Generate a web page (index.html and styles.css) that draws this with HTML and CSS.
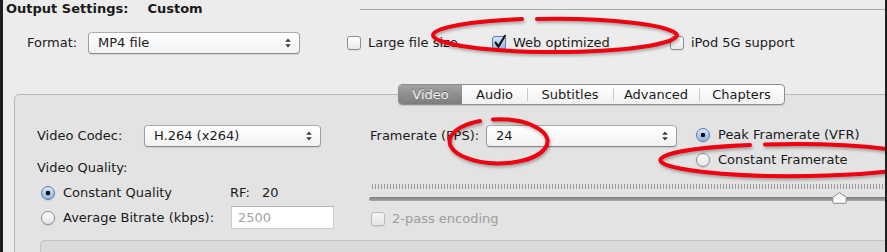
FILE: index.html
```html
<!DOCTYPE html>
<html lang="en">
<head>
    <meta charset="UTF-8">
    <title>Output Settings</title>
    <link rel="stylesheet" href="styles.css">
</head>
<body>

<div class="window">

    <div class="output-head">
        <span class="title">Output Settings:</span>
        <span class="title preset">Custom</span>
        <span class="rule"></span>
    </div>

    <div class="format-row">
        <span class="format-label">Format:</span>
        <div class="popup popup-format">
            <span>MP4 file</span>
            <svg class="arrows" width="6" height="10" viewBox="0 0 6 10"><path d="M3 0.5 L5.8 3.8 H0.2Z M3 9.5 L5.8 6.2 H0.2Z" fill="#3a3a3a"/></svg>
        </div>
        <label class="check check-large"><span class="box"></span>Large file size</label>
        <label class="check check-web"><span class="box checked"><svg class="tick" width="14" height="15" viewBox="0 0 14 15"><path d="M2.6 8.6 L5.4 12.6 L12 1.8" fill="none" stroke="#161616" stroke-width="2.2" stroke-linecap="round" stroke-linejoin="round"/></svg></span>Web optimized</label>
        <label class="check"><span class="box"></span>iPod 5G support</label>
    </div>

    <div class="panel">
        <div class="tabs">
            <span class="tab tab-video active">Video</span>
            <span class="tab tab-audio">Audio</span>
            <span class="tab tab-wide">Subtitles</span>
            <span class="tab tab-wide">Advanced</span>
            <span class="tab tab-last">Chapters</span>
        </div>

        <div class="panel-body">
            <div class="col-left">
                <div class="codec-row">
                    <span class="codec-label">Video Codec:</span>
                    <div class="popup popup-codec">
                        <span>H.264 (x264)</span>
                        <svg class="arrows" width="6" height="10" viewBox="0 0 6 10"><path d="M3 0.5 L5.8 3.8 H0.2Z M3 9.5 L5.8 6.2 H0.2Z" fill="#3a3a3a"/></svg>
                    </div>
                </div>
                <div class="quality-title">Video Quality:</div>
                <div class="quality-row">
                    <span class="radio on"></span>
                    <span class="quality-label">Constant Quality</span>
                    <span class="rf">RF:</span><span class="rf-value">20</span>
                </div>
                <div class="quality-row bitrate-row">
                    <span class="radio"></span>
                    <span class="quality-label">Average Bitrate (kbps):</span>
                    <div class="field">2500</div>
                </div>
            </div>

            <div class="col-right">
                <div class="rate-row">
                    <span class="rate-label">Framerate (FPS):</span>
                    <div class="popup popup-rate">
                        <span>24</span>
                        <svg class="arrows" width="6" height="10" viewBox="0 0 6 10"><path d="M3 0.5 L5.8 3.8 H0.2Z M3 9.5 L5.8 6.2 H0.2Z" fill="#3a3a3a"/></svg>
                    </div>
                    <div class="rate-options">
                        <div class="option"><span class="radio on"></span>Peak Framerate (VFR)</div>
                        <div class="option"><span class="radio"></span>Constant Framerate</div>
                    </div>
                </div>
                <div class="slider">
                    <div class="ticks"></div>
                    <div class="track"></div>
                    <svg class="thumb" width="15" height="12" viewBox="0 0 15 12"><path d="M7.5 0.7 L14.2 5.2 V10 Q14.2 11.3 12.9 11.3 H2.1 Q0.8 11.3 0.8 10 V5.2 Z" fill="#fbfbfb" stroke="#8a8a8a" stroke-width="1"/></svg>
                </div>
                <label class="check disabled"><span class="box"></span>2-pass encoding</label>
            </div>
        </div>

        <div class="subpanel"></div>
    </div>

    <svg class="marks" width="887" height="252" viewBox="0 0 887 252">
        <path d="M522 19 A122 17 0 0 0 433 35 A122 17 0 0 0 677 35 A122 17 0 0 0 537 19"/>
        <path d="M480 121 A49 22 0 1 0 493 119.5"/>
        <path d="M750 145 A132 16 0 1 0 765 144.5"/>
    </svg>

</div>

</body>
</html>
```

FILE: styles.css
```css
body {
    margin: 0;
    background-color: #1e1e1e;
    font-family: "DejaVu Sans", sans-serif;
    font-size: 13px;
    line-height: 16px;
    color: #1a1a1a;
}
.window {
    position: relative;
    margin-left: 3px;
    width: 882px;
    height: 252px;
    background-color: #ececec;
    overflow: hidden;
}
.output-head {
    display: flex;
    align-items: center;
    height: 16px;
    margin-top: 1px;
    padding-left: 3px;
}
.title {
    font-weight: bold;
    white-space: nowrap;
}
.preset {
    margin-left: 19px;
}
.rule {
    flex: 1;
    height: 1px;
    margin-left: 157px;
    background-color: #a9a9a9;
}
.format-row {
    display: flex;
    align-items: center;
    height: 22px;
    margin-top: 15px;
    padding-left: 24px;
}
.format-label {
    width: 61px;
}
.popup {
    box-sizing: border-box;
    display: flex;
    align-items: center;
    justify-content: space-between;
    height: 22px;
    padding: 0 8px 0 9px;
    border: 1px solid #9d9d9d;
    border-top-color: #acacac;
    border-bottom-color: #878787;
    border-radius: 4px;
    background: linear-gradient(#ffffff, #f2f2f2);
    box-shadow: 0 1px 1px rgba(0, 0, 0, 0.1);
    white-space: nowrap;
}
.popup-format {
    width: 212px;
}
.popup-codec {
    width: 177px;
}
.popup-rate {
    width: 191px;
}
.check {
    display: flex;
    align-items: center;
    white-space: nowrap;
}
.check-large {
    width: 145px;
    margin-left: 47px;
}
.check-web {
    width: 178px;
}
.box {
    box-sizing: border-box;
    display: flex;
    justify-content: center;
    width: 14px;
    height: 14px;
    margin-right: 7px;
    border: 1px solid #8e8e8e;
    border-radius: 3px;
    background: linear-gradient(#ffffff, #e9e9e9);
    box-shadow: 0 1px 1px rgba(0, 0, 0, 0.08);
}
.box.checked {
    border-color: #5b7ba8;
    background: linear-gradient(#d6e6f9, #94b8e4);
}
.tick {
    flex: none;
    margin-top: -3px;
    margin-left: 1px;
}
.check.disabled {
    margin-top: 10px;
    margin-left: 2px;
    color: #9d9d9d;
}
.check.disabled .box {
    border-color: #bdbdbd;
    background: linear-gradient(#f4f4f4, #e6e6e6);
}
.panel {
    margin: 40px -30px 0 11px;
    height: 200px;
    border: 1px solid #b8b8b8;
    border-radius: 5px 0 0 0;
    background-color: #e3e3e3;
}
.tabs {
    display: flex;
    width: 385px;
    height: 19px;
    margin: -11px 0 0 383px;
    border: 1px solid #8d8d8d;
    border-radius: 4px;
    background: linear-gradient(#ffffff, #f1f1f1);
    box-shadow: 0 1px 1px rgba(0, 0, 0, 0.12);
}
.tab {
    display: flex;
    align-items: center;
    justify-content: center;
    height: 19px;
    padding-top: 1px;
    box-sizing: border-box;
    width: 86px;
    background: linear-gradient(#c9c9c9, #c9c9c9) no-repeat left center / 1px 13px;
}
.tab-video {
    width: 63px;
}
.tab-audio {
    width: 65px;
    background: none;
}
.tab-last {
    width: 85px;
}
.tab.active {
    border-radius: 3px 0 0 3px;
    background: linear-gradient(#a2a2a2, #7d7d7d);
    color: #f2f2f2;
    text-shadow: 0 -1px 0 rgba(0, 0, 0, 0.35);
}
.panel-body {
    display: flex;
    margin-top: 20px;
}
.col-left {
    width: 332px;
    margin-left: 22px;
}
.codec-row {
    display: flex;
    align-items: center;
}
.codec-label {
    width: 107px;
}
.quality-title {
    margin-top: 13px;
}
.quality-row {
    display: flex;
    align-items: center;
    height: 22px;
    margin-top: 6px;
}
.bitrate-row {
    height: 23px;
    margin-top: 2px;
}
.radio {
    box-sizing: border-box;
    flex: none;
    width: 14px;
    height: 14px;
    border: 1px solid #8c8c8c;
    border-radius: 50%;
    background: linear-gradient(#ffffff, #e4e4e4);
    box-shadow: 0 1px 1px rgba(0, 0, 0, 0.1);
}
.radio.on {
    border-color: #5a79a6;
    background: radial-gradient(circle, #111 0 2px, transparent 2.6px), linear-gradient(#d8e7f9, #8fb4e3);
}
.quality-row .radio {
    margin-left: 4px;
}
.quality-label {
    width: 167px;
    margin-left: 8px;
    white-space: nowrap;
}
.bitrate-row .quality-label {
    width: 168px;
}
.rf {
    width: 32px;
}
.field {
    box-sizing: border-box;
    width: 103px;
    height: 23px;
    padding: 3px 0 0 6px;
    border: 1px solid #cbcbcb;
    border-top-color: #b5b5b5;
    background-color: #ffffff;
    color: #a2a2a2;
}
.col-right {
    flex: 1;
}
.rate-row {
    display: flex;
    align-items: flex-start;
}
.rate-label {
    width: 116px;
    margin-left: 1px;
    line-height: 22px;
    white-space: nowrap;
}
.rate-options {
    margin: 2px 0 0 19px;
}
.option {
    display: flex;
    align-items: center;
    gap: 8px;
    white-space: nowrap;
}
.option + .option {
    margin-top: 9px;
}
.slider {
    position: relative;
    margin-top: 16px;
}
.ticks {
    height: 5px;
    margin-left: 3px;
    background: repeating-linear-gradient(90deg, #9a9a9a 0 1px, transparent 1px 3px);
}
.track {
    height: 4px;
    margin-top: 8px;
    border-radius: 2px;
    background: linear-gradient(#7d7d7d, #a9a9a9);
}
.thumb {
    position: absolute;
    left: 463px;
    top: 8px;
}
.subpanel {
    height: 30px;
    margin: 11px 0 0 25px;
    border: 1px solid #c3c3c3;
    border-radius: 5px 0 0 0;
    background-color: #dadada;
}
.marks {
    position: absolute;
    top: 0;
    left: -3px;
    fill: none;
    stroke: #f2000f;
    stroke-width: 4;
    stroke-linecap: round;
    filter: drop-shadow(1px 2px 1.4px rgba(0, 0, 0, 0.3));
}
```
